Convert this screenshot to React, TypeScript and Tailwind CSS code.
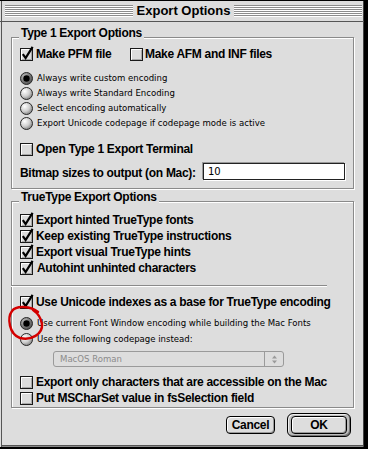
import React from "react";

const bold = "font-bold text-[12px] tracking-[-0.3px] text-black";
const plain = "font-['DejaVu_Sans_Condensed','DejaVu_Sans',sans-serif] text-[9.5px] text-black";

const Check = ({ checked }: { checked?: boolean }) => (
  <svg width="13" height="13" viewBox="0 0 13 13" overflow="visible" className="shrink-0">
    <rect x="0.5" y="0.5" width="12" height="12" fill="#dcdcdc" stroke="#1a1a1a" />
    <path d="M1.5 11.5V1.5H11.5" stroke="#fff" fill="none" />
    <path d="M2 11.5H11.5V2" stroke="#a8a8a8" fill="none" />
    {checked && (
      <path d="M2.8 6.2 L5.6 10 L12.6 -1.2" stroke="#000" strokeWidth="2.2" fill="none" strokeLinejoin="miter" />
    )}
  </svg>
);

const Radio = ({ on }: { on?: boolean }) => (
  <svg width="13" height="13" viewBox="0 0 13 13" className="shrink-0">
    <defs>
      <radialGradient id="radOff" cx="35%" cy="32%" r="75%">
        <stop offset="0" stopColor="#ffffff" />
        <stop offset="0.55" stopColor="#cfcfcf" />
        <stop offset="1" stopColor="#7c7c7c" />
      </radialGradient>
      <radialGradient id="radOn" cx="35%" cy="32%" r="75%">
        <stop offset="0" stopColor="#bdbdbd" />
        <stop offset="1" stopColor="#4a4a4a" />
      </radialGradient>
    </defs>
    <circle cx="6.5" cy="6.5" r="6" fill={on ? "url(#radOn)" : "url(#radOff)"} stroke="#2a2a2a" />
    {on && <circle cx="6.5" cy="6.5" r="3.2" fill="#000" />}
  </svg>
);

const CheckRow = ({ label, checked, extra = "" }: { label: string; checked?: boolean; extra?: string }) => (
  <div className="flex items-center h-[16px] gap-[3px]">
    <Check checked={checked} />
    <span className={`${bold} ${extra}`}>{label}</span>
  </div>
);

const RadioRow = ({ label, on, h = "h-[15px]" }: { label: string; on?: boolean; h?: string }) => (
  <div className={`flex items-center ${h} gap-[4px]`}>
    <Radio on={on} />
    <span className={plain}>{label}</span>
  </div>
);

const Stripes = () => (
  <div className="flex-1 flex flex-col">
    {[0, 1, 2, 3, 4, 5].map((i) => (
      <div key={i} className="h-[2px] bg-white border-t border-[#8c8c8c]" />
    ))}
  </div>
);

const Group = ({ title, h, children }: { title: string; h: string; children: React.ReactNode }) => (
  <div
    className={`relative ${h} w-[343px] border border-[#8a8a8a] shadow-[1px_1px_0_#fff,inset_1px_1px_0_#fff] pl-[8px] pr-[8px] flex flex-col`}
  >
    <span className={`absolute left-[7px] -top-[12px] px-[2px] leading-[14px] bg-[#dddddd] ${bold}`}>{title}</span>
    {children}
  </div>
);

export default function App() {
  return (
    <div className="w-[368px] h-[449px] bg-black font-['Liberation_Sans',Arial,sans-serif] relative">
      <div className="w-[364px] h-[447px] bg-[#dddddd] border-t border-black shadow-[inset_1px_0_0_#dddddd,inset_2px_0_0_#555,inset_-1px_0_0_#444,inset_0_-1px_0_#8a8a8a,inset_0_-2px_0_#555] flex flex-col">
        <div className="h-[21px] flex items-center pl-[5px] pr-[2px] border-b border-[#555]">
          <Stripes />
          <span className="px-[4px] font-bold text-[13px] leading-[16px] text-black">Export Options</span>
          <Stripes />
        </div>

        <div className="pl-[11px] flex flex-col">
          <div className="mt-[15px]">
            <Group title="Type 1 Export Options" h="h-[152px]">
              <div className="mt-[8px] flex items-center h-[16px]">
                <div className="w-[110px] flex items-center gap-[3px]">
                  <Check checked />
                  <span className={bold}>Make PFM file</span>
                </div>
                <div className="flex items-center gap-[2px]">
                  <Check />
                  <span className={bold}>Make AFM and INF files</span>
                </div>
              </div>
              <div className="mt-[9px] flex flex-col">
                <RadioRow on label="Always write custom encoding" />
                <RadioRow label="Always write Standard Encoding" />
                <RadioRow label="Select encoding automatically" />
                <RadioRow label="Export Unicode codepage if codepage mode is active" />
              </div>
              <div className="mt-[10px]">
                <CheckRow label="Open Type 1 Export Terminal" />
              </div>
              <div className="mt-[6px] flex items-center justify-between h-[16px]">
                <span className={`${bold} pt-[3px]`}>Bitmap sizes to output (on Mac):</span>
                <div className="w-[142px] h-[17px] bg-white border border-[#222] shadow-[-1px_-1px_0_#999,1px_1px_0_#fff] flex items-center pl-[4px]">
                  <span className="font-['DejaVu_Sans',sans-serif] text-[10px] text-black">10</span>
                </div>
              </div>
            </Group>
          </div>

          <div className="mt-[12px]">
            <Group title="TrueType Export Options" h="h-[207px]">
              <div className="mt-[10px] flex flex-col">
                <CheckRow checked label="Export hinted TrueType fonts" />
                <CheckRow checked label="Keep existing TrueType instructions" />
                <CheckRow checked label="Export visual TrueType hints" />
                <CheckRow checked label="Autohint unhinted characters" extra="ml-[1px]" />
              </div>
              <div className="mt-[9px] -ml-[9px] w-[316px] h-[2px] border-t border-[#8a8a8a] bg-white" />
              <div className="mt-[7px]">
                <CheckRow checked label="Use Unicode indexes as a base for TrueType encoding" />
              </div>
              <div className="mt-[5px] flex flex-col">
                <RadioRow on h="h-[16px]" label="Use current Font Window encoding while building the Mac Fonts" />
                <RadioRow h="h-[16px]" label="Use the following codepage instead:" />
              </div>
              <div className="mt-[4px] ml-[33px] w-[231px] h-[16px] rounded-[3px] border border-[#9a9a9a] flex">
                <div className="flex-1 flex items-center pl-[6px]">
                  <span className="font-['DejaVu_Sans_Condensed','DejaVu_Sans',sans-serif] text-[9.5px] text-[#8c8c8c]">MacOS Roman</span>
                </div>
                <div className="w-[19px] border-l border-[#9a9a9a] flex items-center justify-center">
                  <svg width="5" height="9" viewBox="0 0 5 9">
                    <path d="M2.5 0.5 L5 3.5 H0 Z" fill="#9a9a9a" />
                    <path d="M2.5 8.5 L5 5.5 H0 Z" fill="#9a9a9a" />
                  </svg>
                </div>
              </div>
              <div className="mt-[7px] flex flex-col">
                <CheckRow label="Export only characters that are accessible on the Mac" />
                <CheckRow label="Put MSCharSet value in fsSelection field" />
              </div>
            </Group>
          </div>

          <div className="mt-[5px] pl-[215px] flex items-center h-[24px] gap-[12px]">
            <div className="w-[49px] h-[18px] rounded-[4px] border border-black bg-[#dddddd] shadow-[inset_1px_1px_0_#fff,inset_-1px_-1px_0_#9a9a9a] flex items-center justify-center">
              <span className={bold}>Cancel</span>
            </div>
            <div className="w-[64px] h-[24px] rounded-[6px] border border-black bg-[#bdbdbd] shadow-[inset_1px_1px_0_#eee,inset_-1px_-1px_0_#777] px-[3px] py-[2px]">
              <div className="w-full h-full rounded-[4px] border border-black bg-[#dddddd] shadow-[inset_1px_1px_0_#fff,inset_-1px_-1px_0_#9a9a9a] flex items-center justify-center">
                <span className={bold}>OK</span>
              </div>
            </div>
          </div>
        </div>
      </div>

      <svg className="absolute left-0 top-[300px]" width="50" height="45" viewBox="0 0 50 45">
        <path
          d="M38 12 C31 6, 16 5, 12 11 C7 18, 9 34, 20 38 C31 41, 43 34, 42 24 C41 18, 39 14, 33 10"
          stroke="#d40000"
          strokeWidth="2.4"
          fill="none"
          strokeLinecap="round"
        />
      </svg>
    </div>
  );
}
